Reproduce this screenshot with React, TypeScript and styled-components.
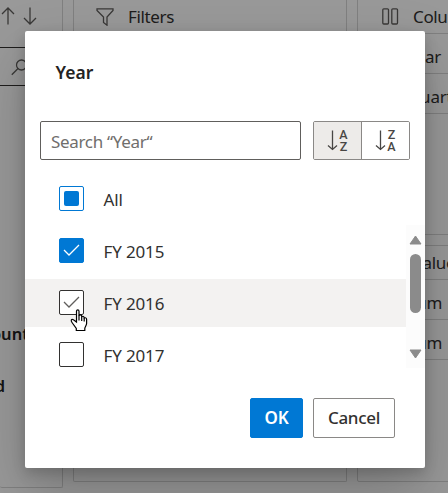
import React from "react";
import styled, { createGlobalStyle, css } from "styled-components";

const Global = createGlobalStyle`
  * { box-sizing: border-box; }
  html, body { margin: 0; height: 100%; overflow: hidden; }
  body { font-family: "Noto Sans", "Open Sans", sans-serif; font-size: 17px; color: #323130; }
  button, input { font: inherit; color: inherit; }
  svg { flex: none; }
`;

const Page = styled.main`
  position: relative;
  width: 448px;
  height: 493px;
  overflow: hidden;
  background: #fff;
`;

const Board = styled.div`
  display: grid;
  grid-template-columns: 63px 274px 120px;
  column-gap: 10px;
  height: 493px;
  white-space: nowrap;
`;

const Column = styled.div`
  display: flex;
  flex-direction: column;
  gap: 10px;
`;

const Panel = styled.section<{ $height: number; $top?: boolean; $left?: boolean }>`
  flex: none;
  height: ${(p) => p.$height}px;
  overflow: hidden;
  border: 1px solid #d6d6d6;
  border-top-width: ${(p) => (p.$top ? 1 : 0)}px;
  border-left-width: ${(p) => (p.$left ? 1 : 0)}px;
  border-radius: ${(p) => (p.$top ? "2px" : "0 0 2px 2px")};
`;

const PanelHeader = styled.header<{ $gap: number; $inset: number }>`
  display: flex;
  align-items: center;
  height: 33px;
  padding-left: ${(p) => p.$inset}px;
  gap: ${(p) => p.$gap}px;
  letter-spacing: -0.35px;
`;

const FieldRow = styled.div`
  height: 40px;
  padding: 4px 0 0 49px;
  line-height: 37px;
  border-top: 1px solid #d6d6d6;
  letter-spacing: -0.2px;
  &:last-child { height: 41px; border-bottom: 1px solid #d6d6d6; }
`;

const SortTools = styled.div`
  display: flex;
  height: 47px;
  padding-top: 7px;
  margin-left: -1px;
  gap: 4px;
`;

const FieldSearch = styled.div`
  height: 39px;
  width: 70px;
  padding: 10px 0 0 11px;
  border: solid #323130;
  border-width: 1px 0;
`;

const FieldName = styled.div<{ $space: number; $shift: number }>`
  margin-top: ${(p) => p.$space}px;
  margin-left: ${(p) => p.$shift}px;
  height: 24px;
  line-height: 24px;
  font-weight: 600;
  font-size: 16.5px;
  color: #242322;
`;

const Backdrop = styled.div`
  position: absolute;
  inset: 0;
  padding: 31px 23px 25px 25px;
  background: rgba(0, 0, 0, 0.4);
`;

const Dialog = styled.section`
  width: 400px;
  height: 437px;
  padding: 29px 15px 0;
  border-radius: 2px;
  background: #fff;
  box-shadow: 0 25px 58px rgba(0, 0, 0, 0.22), 0 5px 14px rgba(0, 0, 0, 0.18);
`;

const Title = styled.h2`
  margin: 0 0 37px 15.5px;
  font-size: 17.5px;
  font-weight: 600;
  line-height: 24px;
  color: #242322;
`;

const SearchBar = styled.div`
  display: flex;
  gap: 12px;
  height: 39px;
`;

const SearchInput = styled.input`
  width: 261px;
  padding: 1px 10px 0;
  border: 1px solid #605e5c;
  border-radius: 2px;
  outline: 0;
  letter-spacing: -0.33px;
  &::placeholder { color: #706e6c; opacity: 1; }
`;

const SortGroup = styled.div`
  display: flex;
  width: 97px;
  border: 1px solid #8a8886;
  border-radius: 2px;
  overflow: hidden;
`;

const SortButton = styled.button<{ $active?: boolean }>`
  display: flex;
  align-items: center;
  justify-content: center;
  flex: 1;
  gap: 1px;
  padding: 0;
  border: 0;
  background: ${(p) => (p.$active ? "#edebe9" : "#fff")};
  & + & { border-left: 1px solid #8a8886; }
`;

const SortLetters = styled.span`
  display: flex;
  flex-direction: column;
  gap: 1px;
  width: 10px;
  font: 500 12.5px/11px Roboto, sans-serif;
  color: #484644;
  text-align: center;
`;

const Options = styled.div`
  display: flex;
  margin: 15px -15px 0;
  height: 193px;
`;

const OptionList = styled.div`
  width: 381px;
`;

const OptionRow = styled.label<{ $hovered?: boolean }>`
  display: flex;
  align-items: center;
  gap: 19.5px;
  height: 48px;
  margin-bottom: 4px;
  padding: 0 0 1px 34px;
  letter-spacing: -0.15px;
  background: ${(p) => (p.$hovered ? "#f3f2f1" : "transparent")};
`;

const OptionText = styled.span`
  line-height: 24px;
  padding-top: 2px;
`;

type Check = "mixed" | "checked" | "hover" | "empty";

const Box = styled.span<{ $state: Check }>`
  position: relative;
  display: flex;
  align-items: center;
  justify-content: center;
  width: 25px;
  height: 25px;
  border: 1px solid #323130;
  border-radius: 2px;
  background: #fff;
  color: #605e5c;
  ${(p) => (p.$state === "mixed" || p.$state === "checked") && css`border-color: #0078d4;`}
  ${(p) => p.$state === "checked" && css`background: #0078d4; color: #fff;`}
`;

const MixedMark = styled.span`
  width: 15px;
  height: 15px;
  border-radius: 2px;
  background: #0078d4;
`;

const Pointer = styled.svg`
  position: absolute;
  left: 10px;
  top: 18px;
  z-index: 1;
`;

const ScrollRail = styled.div`
  display: flex;
  flex-direction: column;
  align-items: center;
  width: 19px;
  height: 143px;
  margin-top: 50px;
  padding: 10px 0 9px;
  background: #fcfcfc;
`;

const Thumb = styled.div`
  width: 11px;
  height: 59px;
  margin: 9px 0 36px;
  border-radius: 6px;
  background: #8b8b8b;
`;

const Footer = styled.footer`
  display: flex;
  justify-content: flex-end;
  gap: 10px;
  margin-top: 30px;
  padding-right: 15px;
`;

const Action = styled.button<{ $primary?: boolean }>`
  width: ${(p) => (p.$primary ? 53 : 82)}px;
  height: 40px;
  padding: 0 0 1px;
  border: 1px solid ${(p) => (p.$primary ? "#0078d4" : "#8a8886")};
  border-radius: 2px;
  background: ${(p) => (p.$primary ? "#0078d4" : "#fff")};
  color: ${(p) => (p.$primary ? "#fff" : "#323130")};
  font-weight: ${(p) => (p.$primary ? 600 : 500)};
  letter-spacing: -0.3px;
`;

const Arrow = ({ up }: { up?: boolean }) => (
  <svg width="18" height="18" viewBox="0 0 18 18" fill="none" stroke="#605e5c" strokeWidth="1.3">
    <path d={up ? "M9 17.5V1M3 7l6-6 6 6" : "M9 .5V17M3 11l6 6 6-6"} />
  </svg>
);

const SortArrow = () => (
  <svg width="11" height="21" viewBox="0 0 11 21" fill="none" stroke="#484644" strokeWidth="1.3">
    <path d="M5.5 .5v18.8M1 15.5l4.5 4 4.5-4" />
  </svg>
);

const Tick = () => (
  <svg width="17" height="13" viewBox="0 0 17 13" fill="none" stroke="currentColor" strokeWidth="1.3">
    <path d="M1 6l5 5L16 1" />
  </svg>
);

const Hand = () => (
  <Pointer width="18" height="23" viewBox="0 0 18 23" fill="#fff" stroke="#000" strokeWidth="1.2">
    <path d="M6.5 13V2.2C6.5.3 9 .3 9 2.2V7c0-1.5 2.7-1.4 2.7.4v.8c0-1.4 2.5-1.2 2.5.5v.8c0-1.2 2.4-1 2.4.7v4.3c0 2-1.8 3.3-1.8 5V21.5H6.3v-2L2 13.5C.4 11.2 1.5 9.7 3.4 10.7L6.5 13Z" />
    <path d="M9 6.5v5M11.7 8v4M14.2 9v3.5" />
  </Pointer>
);

const Triangle = ({ down }: { down?: boolean }) => (
  <svg width="13" height="10" viewBox="0 0 13 10" fill="#8b8b8b" stroke="#8b8b8b" strokeLinejoin="round">
    <path d={down ? "M1 1h11L6.5 9Z" : "M1 9h11L6.5 1Z"} />
  </svg>
);

const items: { name: string; state: Check }[] = [
  { name: "All", state: "mixed" },
  { name: "FY 2015", state: "checked" },
  { name: "FY 2016", state: "hover" },
  { name: "FY 2017", state: "empty" },
];

export default function App() {
  return (
    <Page>
      <Global />
      <Board>
        <Panel $height={488}>
          <SortTools><Arrow up /><Arrow /></SortTools>
          <FieldSearch>
            <svg width="17" height="17" viewBox="0 0 17 17" fill="none" stroke="#605e5c" strokeWidth="1.3">
              <circle cx="10.5" cy="6" r="5" /><path d="M7 9.5.8 15.8" />
            </svg>
          </FieldSearch>
          <FieldName $space={236} $shift={-36}>Amount</FieldName>
          <FieldName $space={28} $shift={-23}>Old</FieldName>
        </Panel>
        <Panel $height={482} $left>
          <PanelHeader $gap={14} $inset={22}>
            <svg width="18" height="18" viewBox="0 0 18 18" fill="none" stroke="#605e5c" strokeWidth="1.3">
              <path d="M1 .8h16v1.6L11 9v8.2L7.5 14.5V9L1 2.4Z" />
            </svg>
            Filters
          </PanelHeader>
        </Panel>
        <Column>
          <Panel $height={235} $left>
            <PanelHeader $gap={14} $inset={23}>
              <svg width="18" height="17" viewBox="0 0 18 17" fill="none" stroke="#605e5c" strokeWidth="1.3">
                <rect x="1.8" y=".8" width="5.7" height="15.2" rx="1" /><rect x="10.8" y=".8" width="5.7" height="15.2" rx="1" />
              </svg>
              Columns
            </PanelHeader>
            <FieldRow>Year</FieldRow>
            <FieldRow>Quarter</FieldRow>
          </Panel>
          <Panel $height={237} $left $top>
            <PanelHeader $gap={14} $inset={23}>
              <svg width="18" height="17" viewBox="0 0 18 17" fill="none" stroke="#605e5c"><path d="M15 1H3l6 7-6 8h12" /></svg>
              Values
            </PanelHeader>
            <FieldRow>Sum</FieldRow>
            <FieldRow>Sum</FieldRow>
          </Panel>
        </Column>
      </Board>
      <Backdrop>
        <Dialog role="dialog" aria-label="Year">
          <Title>Year</Title>
          <SearchBar>
            <SearchInput placeholder="Search “Year“" />
            <SortGroup>
              <SortButton $active><SortArrow /><SortLetters><span>A</span><span>Z</span></SortLetters></SortButton>
              <SortButton><SortArrow /><SortLetters><span>Z</span><span>A</span></SortLetters></SortButton>
            </SortGroup>
          </SearchBar>
          <Options>
            <OptionList>
              {items.map((item) => (
                <OptionRow key={item.name} $hovered={item.state === "hover"}>
                  <Box $state={item.state}>
                    {item.state === "mixed" && <MixedMark />}
                    {(item.state === "checked" || item.state === "hover") && <Tick />}
                    {item.state === "hover" && <Hand />}
                  </Box>
                  <OptionText>{item.name}</OptionText>
                </OptionRow>
              ))}
            </OptionList>
            <ScrollRail><Triangle /><Thumb /><Triangle down /></ScrollRail>
          </Options>
          <Footer>
            <Action $primary>OK</Action>
            <Action>Cancel</Action>
          </Footer>
        </Dialog>
      </Backdrop>
    </Page>
  );
}
